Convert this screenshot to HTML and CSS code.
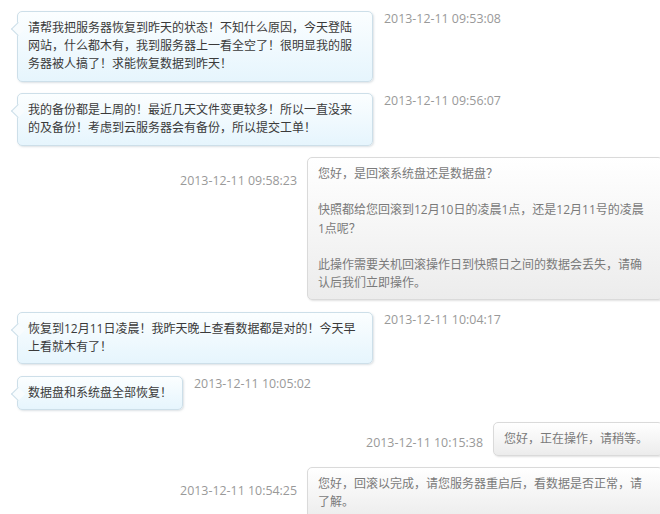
FILE: index.html
```html
<!DOCTYPE html>
<html lang="zh-CN">
<head>
<meta charset="utf-8">
<title>工单对话</title>
<link rel="stylesheet" href="styles.css">
</head>
<body>
<div class="chat">
  <div class="row row-user">
    <div class="bubble bubble-user">请帮我把服务器恢复到昨天的状态！不知什么原因，今天登陆网站，什么都木有，我到服务器上一看全空了！很明显我的服务器被人搞了！求能恢复数据到昨天！</div>
    <div class="time">2013-12-11 09:53:08</div>
  </div>
  <div class="row row-user">
    <div class="bubble bubble-user">我的备份都是上周的！最近几天文件变更较多！所以一直没来的及备份！考虑到云服务器会有备份，所以提交工单！</div>
    <div class="time">2013-12-11 09:56:07</div>
  </div>
  <div class="row row-staff">
    <div class="time">2013-12-11 09:58:23</div>
    <div class="bubble bubble-staff">您好，是回滚系统盘还是数据盘？<br><br>快照都给您回滚到12月10日的凌晨1点，还是12月11号的凌晨1点呢？<br><br>此操作需要关机回滚操作日到快照日之间的数据会丢失，请确认后我们立即操作。</div>
  </div>
  <div class="row row-user">
    <div class="bubble bubble-user">恢复到12月11日凌晨！我昨天晚上查看数据都是对的！今天早上看就木有了！</div>
    <div class="time">2013-12-11 10:04:17</div>
  </div>
  <div class="row row-user">
    <div class="bubble bubble-user">数据盘和系统盘全部恢复！</div>
    <div class="time">2013-12-11 10:05:02</div>
  </div>
  <div class="row row-staff">
    <div class="time time-short">2013-12-11 10:15:38</div>
    <div class="bubble bubble-staff">您好，正在操作，请稍等。</div>
  </div>
  <div class="row row-staff">
    <div class="time">2013-12-11 10:54:25</div>
    <div class="bubble bubble-staff">您好，回滚以完成，请您服务器重启后，看数据是否正常，请了解。</div>
  </div>
</div>
</body>
</html>
```
FILE: styles.css
```css
html, body {
  margin: 0;
  padding: 0;
  background: #ffffff;
  overflow: hidden;
}

body {
  font-family: "Open Sans", "Noto Sans CJK SC", sans-serif;
  font-size: 12px;
}

.chat {
  width: 646px;
  padding: 11px 0 0 17px;
  display: flex;
  flex-direction: column;
  gap: 11.5px;
}

.row {
  display: flex;
  align-items: flex-start;
}

.row-staff {
  justify-content: flex-end;
}

.bubble {
  position: relative;
  box-sizing: border-box;
  max-width: 356px;
  padding: 7px 10px;
  line-height: 18.2px;
  border-radius: 5px;
  border: 1px solid;
}

.bubble-user {
  color: #3a3a3a;
  background: linear-gradient(to bottom, #fbfeff 0%, #e6f5fd 100%);
  border-color: #cddfe9;
  box-shadow: 1px 1px 2px rgba(120, 140, 150, 0.25);
}

.bubble-user::before {
  content: "";
  position: absolute;
  left: -5px;
  top: 12px;
  width: 9px;
  height: 9px;
  background: #f8fcfe;
  border-left: 1px solid #cddfe9;
  border-bottom: 1px solid #cddfe9;
  transform: rotate(45deg);
}

.bubble-staff {
  padding-right: 14px;
  color: #7a7a7a;
  background: linear-gradient(to bottom, #ffffff 0%, #ececec 100%);
  border-color: #dadada;
  box-shadow: 1px 1px 2px rgba(0, 0, 0, 0.12);
}

.time {
  color: #999999;
  font-size: 12.4px;
  line-height: 16px;
  white-space: nowrap;
}

.row-user .time {
  margin-left: 11px;
  margin-top: 0px;
}

.row-staff .time {
  margin-right: 10px;
  margin-top: 16px;
}

.row-staff .time-short {
  margin-top: 13px;
}
```
